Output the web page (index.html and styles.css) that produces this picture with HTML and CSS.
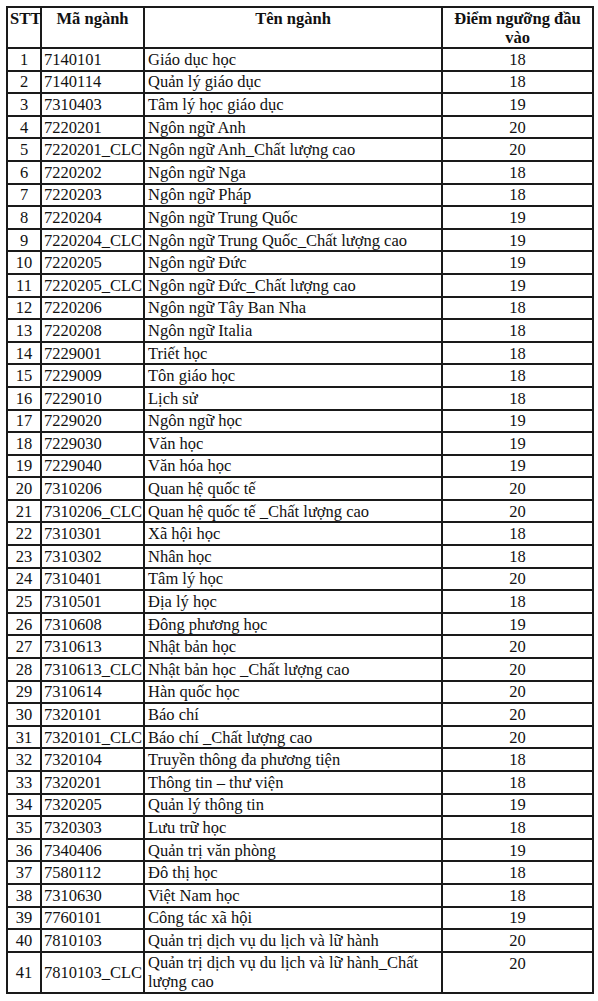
FILE: index.html
```html
<!DOCTYPE html>
<html lang="vi">
<head>
<meta charset="utf-8">
<title>Điểm ngưỡng đầu vào</title>
<link rel="stylesheet" href="styles.css">
</head>
<body>
<table class="scores">
<colgroup>
<col class="c-stt"><col class="c-code"><col class="c-name"><col class="c-score">
</colgroup>
<thead>
<tr><th>STT</th><th>Mã ngành</th><th>Tên ngành</th><th>Điểm ngưỡng đầu vào</th></tr>
</thead>
<tbody>
<tr><td class="stt">1</td><td class="code">7140101</td><td class="name">Giáo dục học</td><td class="score">18</td></tr>
<tr><td class="stt">2</td><td class="code">7140114</td><td class="name">Quản lý giáo dục</td><td class="score">18</td></tr>
<tr><td class="stt">3</td><td class="code">7310403</td><td class="name">Tâm lý học giáo dục</td><td class="score">19</td></tr>
<tr><td class="stt">4</td><td class="code">7220201</td><td class="name">Ngôn ngữ Anh</td><td class="score">20</td></tr>
<tr><td class="stt">5</td><td class="code">7220201_CLC</td><td class="name">Ngôn ngữ Anh_Chất lượng cao</td><td class="score">20</td></tr>
<tr><td class="stt">6</td><td class="code">7220202</td><td class="name">Ngôn ngữ Nga</td><td class="score">18</td></tr>
<tr><td class="stt">7</td><td class="code">7220203</td><td class="name">Ngôn ngữ Pháp</td><td class="score">18</td></tr>
<tr><td class="stt">8</td><td class="code">7220204</td><td class="name">Ngôn ngữ Trung Quốc</td><td class="score">19</td></tr>
<tr><td class="stt">9</td><td class="code">7220204_CLC</td><td class="name">Ngôn ngữ Trung Quốc_Chất lượng cao</td><td class="score">19</td></tr>
<tr><td class="stt">10</td><td class="code">7220205</td><td class="name">Ngôn ngữ Đức</td><td class="score">19</td></tr>
<tr><td class="stt">11</td><td class="code">7220205_CLC</td><td class="name">Ngôn ngữ Đức_Chất lượng cao</td><td class="score">19</td></tr>
<tr><td class="stt">12</td><td class="code">7220206</td><td class="name">Ngôn ngữ Tây Ban Nha</td><td class="score">18</td></tr>
<tr><td class="stt">13</td><td class="code">7220208</td><td class="name">Ngôn ngữ Italia</td><td class="score">18</td></tr>
<tr><td class="stt">14</td><td class="code">7229001</td><td class="name">Triết học</td><td class="score">18</td></tr>
<tr><td class="stt">15</td><td class="code">7229009</td><td class="name">Tôn giáo học</td><td class="score">18</td></tr>
<tr><td class="stt">16</td><td class="code">7229010</td><td class="name">Lịch sử</td><td class="score">18</td></tr>
<tr><td class="stt">17</td><td class="code">7229020</td><td class="name">Ngôn ngữ học</td><td class="score">19</td></tr>
<tr><td class="stt">18</td><td class="code">7229030</td><td class="name">Văn học</td><td class="score">19</td></tr>
<tr><td class="stt">19</td><td class="code">7229040</td><td class="name">Văn hóa học</td><td class="score">19</td></tr>
<tr><td class="stt">20</td><td class="code">7310206</td><td class="name">Quan hệ quốc tế</td><td class="score">20</td></tr>
<tr><td class="stt">21</td><td class="code">7310206_CLC</td><td class="name">Quan hệ quốc tế _Chất lượng cao</td><td class="score">20</td></tr>
<tr><td class="stt">22</td><td class="code">7310301</td><td class="name">Xã hội học</td><td class="score">18</td></tr>
<tr><td class="stt">23</td><td class="code">7310302</td><td class="name">Nhân học</td><td class="score">18</td></tr>
<tr><td class="stt">24</td><td class="code">7310401</td><td class="name">Tâm lý học</td><td class="score">20</td></tr>
<tr><td class="stt">25</td><td class="code">7310501</td><td class="name">Địa lý học</td><td class="score">18</td></tr>
<tr><td class="stt">26</td><td class="code">7310608</td><td class="name">Đông phương học</td><td class="score">19</td></tr>
<tr><td class="stt">27</td><td class="code">7310613</td><td class="name">Nhật bản học</td><td class="score">20</td></tr>
<tr><td class="stt">28</td><td class="code">7310613_CLC</td><td class="name">Nhật bản học _Chất lượng cao</td><td class="score">20</td></tr>
<tr><td class="stt">29</td><td class="code">7310614</td><td class="name">Hàn quốc học</td><td class="score">20</td></tr>
<tr><td class="stt">30</td><td class="code">7320101</td><td class="name">Báo chí</td><td class="score">20</td></tr>
<tr><td class="stt">31</td><td class="code">7320101_CLC</td><td class="name">Báo chí _Chất lượng cao</td><td class="score">20</td></tr>
<tr><td class="stt">32</td><td class="code">7320104</td><td class="name">Truyền thông đa phương tiện</td><td class="score">18</td></tr>
<tr><td class="stt">33</td><td class="code">7320201</td><td class="name">Thông tin – thư viện</td><td class="score">18</td></tr>
<tr><td class="stt">34</td><td class="code">7320205</td><td class="name">Quản lý thông tin</td><td class="score">19</td></tr>
<tr><td class="stt">35</td><td class="code">7320303</td><td class="name">Lưu trữ học</td><td class="score">18</td></tr>
<tr><td class="stt">36</td><td class="code">7340406</td><td class="name">Quản trị văn phòng</td><td class="score">19</td></tr>
<tr><td class="stt">37</td><td class="code">7580112</td><td class="name">Đô thị học</td><td class="score">18</td></tr>
<tr><td class="stt">38</td><td class="code">7310630</td><td class="name">Việt Nam học</td><td class="score">18</td></tr>
<tr><td class="stt">39</td><td class="code">7760101</td><td class="name">Công tác xã hội</td><td class="score">19</td></tr>
<tr><td class="stt">40</td><td class="code">7810103</td><td class="name">Quản trị dịch vụ du lịch và lữ hành</td><td class="score">20</td></tr>
<tr class="tall"><td class="stt">41</td><td class="code">7810103_CLC</td><td class="name">Quản trị dịch vụ du lịch và lữ hành_Chất lượng cao</td><td class="score">20</td></tr>
</tbody>
</table>
</body>
</html>
```

FILE: styles.css
```css
html, body {
  margin: 0;
  padding: 0;
  background: #ffffff;
}
body {
  padding: 6px 4px 0 6px;
  font-family: "Liberation Serif", "Times New Roman", serif;
  color: #111111;
}
.scores {
  border-collapse: collapse;
  table-layout: fixed;
  width: 588px;
  font-size: 16.5px;
  line-height: 19px;
}
.c-stt { width: 34px; }
.c-code { width: 103px; }
.c-name { width: 298px; }
.c-score { width: 151px; }

.scores th,
.scores td {
  border: 2px solid #1a1a1a;
  padding: 0 2px;
  white-space: nowrap;
}
.scores thead tr { height: 41px; }
.scores th {
  font-weight: bold;
  vertical-align: top;
  text-align: center;
  padding-top: 1px;
  white-space: normal;
}
.scores tbody tr { height: 22.6px; }
.scores td { vertical-align: middle; }
.scores td.stt { text-align: center; padding: 0; }
.scores td.code { text-align: left; padding-left: 2px; padding-right: 0; }
.scores td.name { text-align: left; padding-left: 3px; }
.scores td.score { text-align: center; }
.scores tr.tall { height: 41px; }
.scores tr.tall td.name { white-space: normal; }
.scores tr.tall td.score { vertical-align: top; padding-top: 1px; }
```
